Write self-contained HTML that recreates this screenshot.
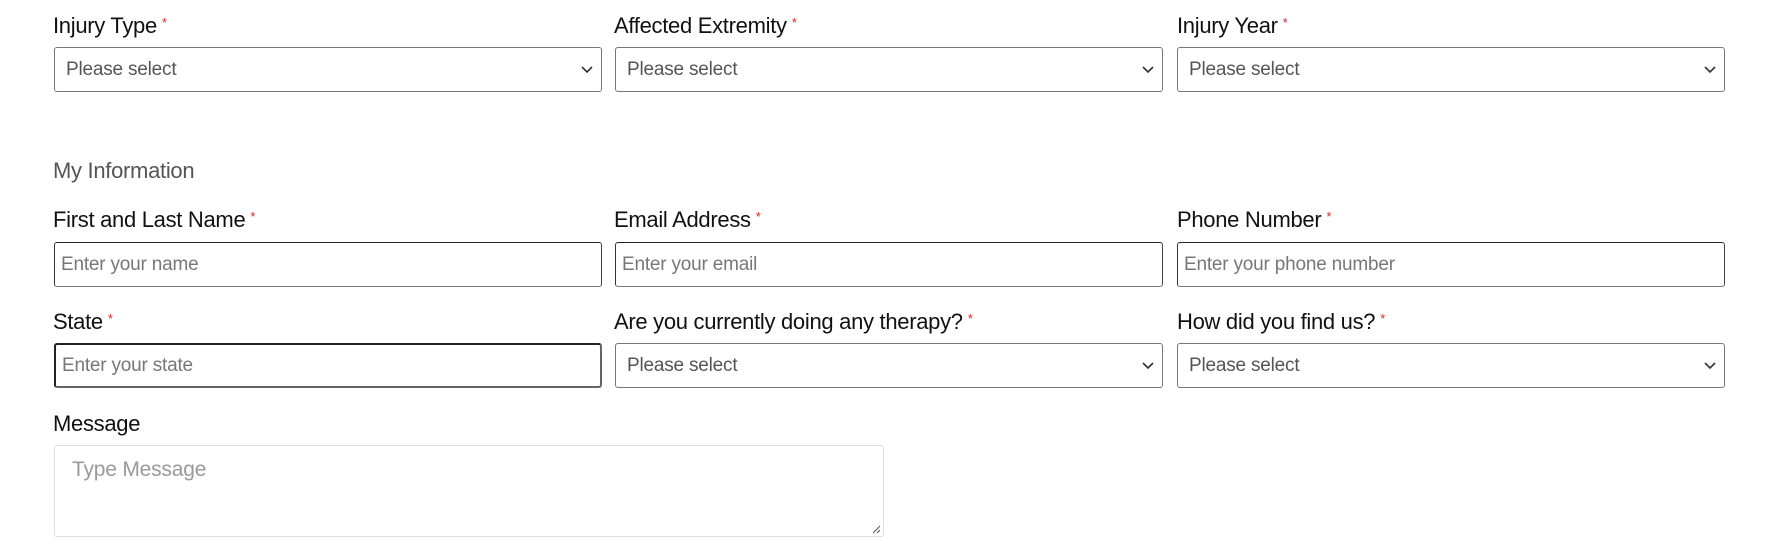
<!DOCTYPE html>
<html><head><meta charset="utf-8"><style>
*{box-sizing:border-box;margin:0;padding:0}
body{width:1779px;height:558px;background:#fff;position:relative;overflow:hidden;font-family:"Liberation Sans",sans-serif;}
.lab{position:absolute;font-size:22px;color:#111;line-height:26px;letter-spacing:-0.3px}
.lab sup{color:#d9252b;font-size:13px;position:relative;top:-3px;margin-left:5px;vertical-align:top}
.box{position:absolute;width:548px;height:45px;border:1px solid #777;border-radius:3px;font-size:19px;color:#555;line-height:43px;padding-left:11px;letter-spacing:-0.2px}
.inp{border-top-color:#222;border-left-color:#333;border-right-color:#444;color:#777;padding-left:6px}
.sel svg{position:absolute;right:8px;top:17px}
</style></head><body>
<div class="lab" style="left:53px;top:13px">Injury Type<sup>*</sup></div>
<div class="lab" style="left:614px;top:13px">Affected Extremity<sup>*</sup></div>
<div class="lab" style="left:1177px;top:13px">Injury Year<sup>*</sup></div>
<div class="box sel" style="left:54px;top:47px">Please select<svg width="12" height="9" viewBox="0 0 12 9"><path d="M1 2l5 5 5-5" fill="none" stroke="#333" stroke-width="1.6"/></svg></div>
<div class="box sel" style="left:615px;top:47px">Please select<svg width="12" height="9" viewBox="0 0 12 9"><path d="M1 2l5 5 5-5" fill="none" stroke="#333" stroke-width="1.6"/></svg></div>
<div class="box sel" style="left:1177px;top:47px">Please select<svg width="12" height="9" viewBox="0 0 12 9"><path d="M1 2l5 5 5-5" fill="none" stroke="#333" stroke-width="1.6"/></svg></div>

<div class="lab" style="left:53px;top:158px;color:#555">My Information</div>

<div class="lab" style="left:53px;top:207px">First and Last Name<sup>*</sup></div>
<div class="lab" style="left:614px;top:207px">Email Address<sup>*</sup></div>
<div class="lab" style="left:1177px;top:207px">Phone Number<sup>*</sup></div>
<div class="box inp" style="left:54px;top:242px">Enter your name</div>
<div class="box inp" style="left:615px;top:242px">Enter your email</div>
<div class="box inp" style="left:1177px;top:242px">Enter your phone number</div>

<div class="lab" style="left:53px;top:309px">State<sup>*</sup></div>
<div class="lab" style="left:614px;top:309px">Are you currently doing any therapy?<sup>*</sup></div>
<div class="lab" style="left:1177px;top:309px">How did you find us?<sup>*</sup></div>
<div class="box inp" style="left:54px;top:343px;border:2px solid #222;border-bottom-color:#666;border-right-color:#666;line-height:41px">Enter your state</div>
<div class="box sel" style="left:615px;top:343px">Please select<svg width="12" height="9" viewBox="0 0 12 9"><path d="M1 2l5 5 5-5" fill="none" stroke="#333" stroke-width="1.6"/></svg></div>
<div class="box sel" style="left:1177px;top:343px">Please select<svg width="12" height="9" viewBox="0 0 12 9"><path d="M1 2l5 5 5-5" fill="none" stroke="#333" stroke-width="1.6"/></svg></div>

<div class="lab" style="left:53px;top:411px">Message</div>
<div class="box" style="left:54px;top:445px;width:830px;height:92px;border-color:#ddd;color:#999;font-size:21px;line-height:20px;padding:14px 0 0 17px">Type Message
<svg style="position:absolute;right:2px;bottom:2px" width="9" height="9" viewBox="0 0 9 9"><path d="M8 1L1 8M8 5L5 8" stroke="#555" stroke-width="1"/></svg></div>
</body></html>
